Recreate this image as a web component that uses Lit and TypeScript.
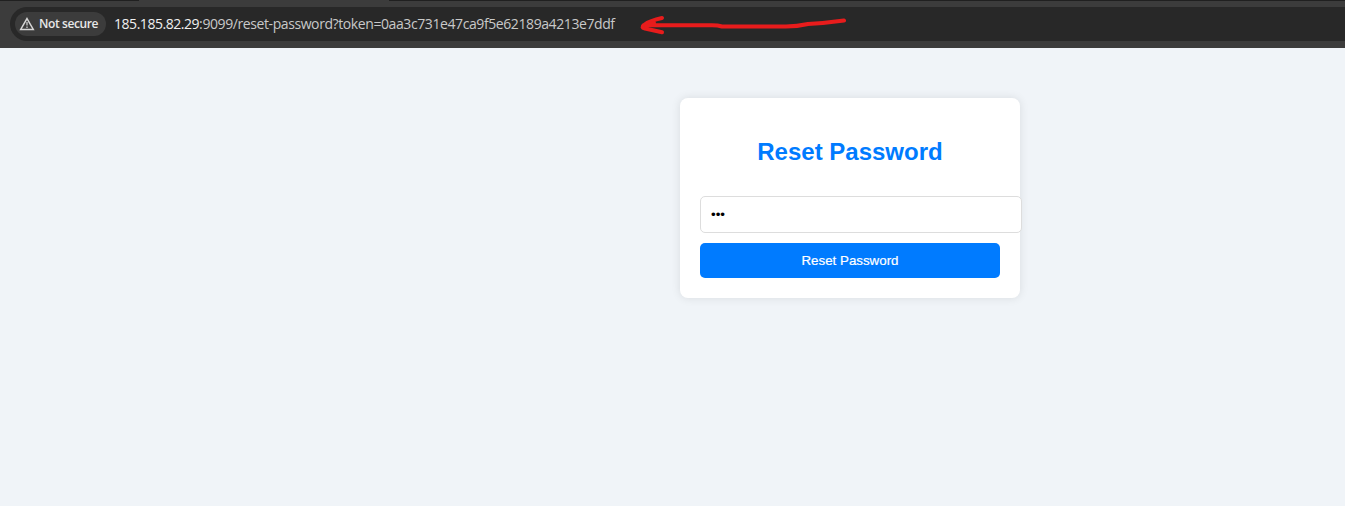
import { LitElement, html, css } from "lit";
import { customElement } from "lit/decorators.js";

@customElement("address-bar")
class AddressBar extends LitElement {
  static styles = css`
    :host { display: block; position: relative; height: 48px; box-sizing: border-box; background: #3c3c3c; font-family: "Segoe UI", "Open Sans", "Noto Sans", sans-serif; }
    .tabs { display: flex; height: 1px; background: #202020; }
    .tab { width: 250px; margin-left: 139px; background: #3c3c3c; }
    .field { display: flex; align-items: center; box-sizing: border-box; height: 34px; margin: 6px 0 0 10px; padding-left: 5px; background: #282828; border-radius: 17px 0 0 17px; }
    .chip { display: flex; align-items: center; box-sizing: border-box; width: 91px; height: 24px; padding-left: 4px; border-radius: 12px; background: #3c3c3c; color: #e8e8e8; font-size: 12px; font-weight: 600; white-space: nowrap; }
    .chip svg { width: 16px; height: 14px; margin-right: 4px; flex: none; }
    .label { padding-bottom: 1px; letter-spacing: -0.4px; }
    .url { display: flex; margin-left: 8px; font-size: 14px; line-height: 20px; letter-spacing: -0.41px; color: #c9c9c9; white-space: nowrap; }
    .host { color: #f0f0f0; letter-spacing: -0.46px; }
    .arrow { position: absolute; left: 636px; top: 12px; width: 216px; height: 26px; }
  `;
  render() {
    return html`
      <div class="tabs"><div class="tab"></div></div>
      <div class="field">
        <div class="chip">
          <svg viewBox="0 0 16 14" fill="none" stroke="#d6d6d6">
            <path d="M8 1.6 14.3 12.4H1.7Z" stroke-width="1.5" />
            <path d="M8 5v3.6M8 9.6v1.4" stroke-width="1.2" />
          </svg>
          <span class="label">Not secure</span>
        </div>
        <div class="url"><span class="host">185.185.82.29</span><span class="path">:9099/reset-password?token=0aa3c731e47ca9f5e62189a4213e7ddf</span></div>
      </div>
      <svg class="arrow" viewBox="636 12 216 26" fill="none" stroke="#e81c1c" stroke-width="4" stroke-linecap="round" stroke-linejoin="round">
        <path d="M844 20.5Q826 23 808 24Q797 26.5 786 26.5H722Q718 25.2 712 25.2H650" />
        <path d="M662 18Q650 20.5 644 25Q640.5 27.5 645 28.5L662 32.2" />
        <path d="M646 26.5 654 23" />
      </svg>
    `;
  }
}

@customElement("app-root")
class AppRoot extends LitElement {
  static styles = css`
    :host { display: block; height: 506px; overflow: hidden; background: #f0f4f8; font-family: Arial, "Liberation Sans", sans-serif; }
    .card { box-sizing: border-box; width: 340px; height: 200px; margin: 50px 0 0 680px; padding: 20px; background: #fff; border-radius: 8px; box-shadow: 0 0 10px rgba(0, 0, 0, 0.1); text-align: center; }
    h2 { margin: 20px 0 30px; font-size: 24px; line-height: 28px; color: #007bff; }
    .password { display: block; box-sizing: border-box; width: 322px; height: 37px; margin: 0; padding: 10px; border: 1px solid #ddd; border-radius: 5px; outline: none; background: #fff; color: #000; font: 13.333px "Liberation Sans", Arial, sans-serif; }
    .submit { display: block; width: 300px; height: 35px; margin: 10px 0 0; padding: 0; border: 0; border-radius: 5px; background: #007bff; color: #fff; font: 13.333px "Liberation Sans", Arial, sans-serif; -webkit-text-stroke: 0.2px #fff; }
  `;
  render() {
    return html`
      <address-bar></address-bar>
      <div class="card">
        <h2>Reset Password</h2>
        <input class="password" type="password" .value=${"123"} />
        <button class="submit">Reset Password</button>
      </div>
    `;
  }
}
